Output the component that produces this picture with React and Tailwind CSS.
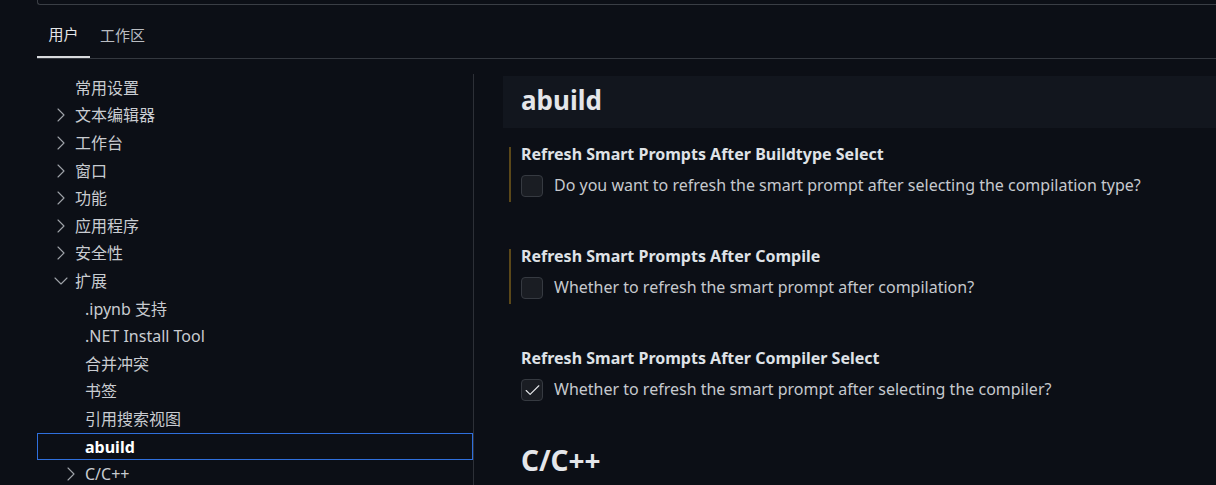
import React from 'react';
import { ChevronRight, ChevronDown, Check } from 'lucide-react';

const font = { fontFamily: '"Noto Sans", "Noto Sans CJK SC", sans-serif' };

const tree = [
    { label: '常用设置', depth: 0 },
    { label: '文本编辑器', depth: 0, chevron: 'right' },
    { label: '工作台', depth: 0, chevron: 'right' },
    { label: '窗口', depth: 0, chevron: 'right' },
    { label: '功能', depth: 0, chevron: 'right' },
    { label: '应用程序', depth: 0, chevron: 'right' },
    { label: '安全性', depth: 0, chevron: 'right' },
    { label: '扩展', depth: 0, chevron: 'down' },
    { label: '.ipynb 支持', depth: 1 },
    { label: '.NET Install Tool', depth: 1 },
    { label: '合并冲突', depth: 1 },
    { label: '书签', depth: 1 },
    { label: '引用搜索视图', depth: 1 },
    { label: 'abuild', depth: 1, selected: true },
    { label: 'C/C++', depth: 1, chevron: 'right' },
];

const settings = [
    { title: 'Refresh Smart Prompts After Buildtype Select', desc: 'Do you want to refresh the smart prompt after selecting the compilation type?', modified: true },
    { title: 'Refresh Smart Prompts After Compile', desc: 'Whether to refresh the smart prompt after compilation?', modified: true },
    { title: 'Refresh Smart Prompts After Compiler Select', desc: 'Whether to refresh the smart prompt after selecting the compiler?', checked: true },
];

const TreeRow = ({ item }) => (
    <div
        className={
            'h-[27.6px] flex items-center text-[16px] ' +
            (item.selected ? 'border border-[#2f6fdc] text-white font-bold' : 'border border-transparent text-[#c9ccd1]')
        }
        style={{ paddingLeft: item.depth ? 21 : 11 }}
    >
        <span className="w-[24px] h-[24px] mr-[2px] flex items-center justify-center text-[#9fa3a9]">
            {item.chevron === 'right' && <ChevronRight size={24} strokeWidth={1.1} />}
            {item.chevron === 'down' && <ChevronDown size={24} strokeWidth={1.1} />}
        </span>
        <span>{item.label}</span>
    </div>
);

const Setting = ({ s }) => (
    <div className={'ml-[6px] pl-[10px] h-[55px] border-l-2 ' + (s.modified ? 'border-[#5b4819]' : 'border-transparent')}>
        <div className="h-[14px] leading-[14px] text-[16px] font-bold text-[#dfe2e6]">{s.title}</div>
        <div className="mt-[14px] flex items-center gap-[11px]">
            <div className="w-[22px] h-[22px] rounded-[4px] bg-[#1a1d23] border border-[#363a41] flex items-center justify-center text-[#e6e8eb]">
                {s.checked && <Check size={19} strokeWidth={1.4} />}
            </div>
            <span className="text-[16px] text-[#c6c9ce] -mt-[2px]">{s.desc}</span>
        </div>
    </div>
);

export default function App() {
    return (
        <div className="w-[1216px] h-[485px] overflow-hidden bg-[#0c0f16]" style={font}>
            <div className="pl-[37px]">
                <div className="h-[5px] border-l border-b border-[#3a3e45] rounded-bl-[3px]" />
                <div className="h-[54px] flex items-end border-b border-[#34383f]">
                    <div className="flex text-[15px]">
                        <div className="w-[53px] h-[44px] pb-[2px] flex items-center justify-center text-[#e4e6e9] border-b-2 border-[#d8dadd] -mb-[1px]">用户</div>
                        <div className="h-[44px] pb-[2px] flex items-center pl-[10px] text-[#b9bcc1]">工作区</div>
                    </div>
                </div>
                <div className="flex mt-[15px]">
                    <div className="w-[437px] shrink-0 border-r border-[#2d3037]">
                        {tree.map((item) => (
                            <TreeRow key={item.label} item={item} />
                        ))}
                    </div>
                    <div className="flex-1 pl-[29px] pt-[2px]">
                        <div className="h-[52px] bg-[#12161e] flex items-center pl-[18px] pb-[4px]">
                            <span className="text-[26px] font-bold text-[#e4e6ea]">abuild</span>
                        </div>
                        <div className="mt-[19px] flex flex-col gap-[47px]">
                            {settings.map((s) => (
                                <Setting key={s.title} s={s} />
                            ))}
                        </div>
                        <div className="mt-[33px] pl-[18px] text-[28px] font-bold text-[#e4e6ea]">C/C++</div>
                    </div>
                </div>
            </div>
        </div>
    );
}
